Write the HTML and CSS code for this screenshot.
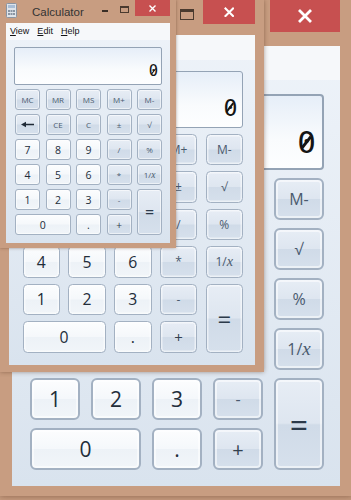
FILE: index.html
```html
<!DOCTYPE html>
<html>
<head>
<meta charset="utf-8">
<link rel="stylesheet" href="styles.css">
</head>
<body>
<div class="desk">
  <div class="win z2">
    <div class="titlebar">
      <svg class="appicon" viewBox="0 0 11 15"><rect x="0.5" y="0.5" width="10" height="14" rx="1" fill="#dfe4ea" stroke="#8a95a3"/><rect x="2" y="2" width="7" height="3" fill="#a9bed6"/><rect x="2" y="7" width="2" height="2" fill="#8a95a3"/><rect x="4.5" y="7" width="2" height="2" fill="#8a95a3"/><rect x="7" y="7" width="2" height="2" fill="#8a95a3"/><rect x="2" y="10" width="2" height="2" fill="#8a95a3"/><rect x="4.5" y="10" width="2" height="2" fill="#8a95a3"/><rect x="7" y="10" width="2" height="2" fill="#8a95a3"/></svg>
      <span class="title">Calculator</span>
      <span class="min"></span>
      <span class="max"></span>
      <span class="close"><svg viewBox="0 0 7 7" class="xicon"><path d="M0.5 0.5L6.5 6.5M6.5 0.5L0.5 6.5" stroke="#fff" stroke-width="1.4" fill="none"/></svg></span>
    </div>
    <div class="client">
      <div class="menubar"><span><u>V</u>iew</span><span><u>E</u>dit</span><span><u>H</u>elp</span></div>
      <div class="body">
        <div class="display"><span class="num">0</span></div>
        <div class="keys">
          <div class="k">MC</div><div class="k">MR</div><div class="k">MS</div><div class="k">M+</div><div class="k">M-</div>
          <div class="k"><svg class="back" viewBox="0 0 13 7"><path d="M4 3.5H13" stroke="#1f2a36" stroke-width="1.5"/><path d="M0 3.5L5 0.7V6.3Z" fill="#1f2a36"/></svg></div><div class="k">CE</div><div class="k">C</div><div class="k">±</div><div class="k">√</div>
          <div class="k d">7</div><div class="k d">8</div><div class="k d">9</div><div class="k">/</div><div class="k">%</div>
          <div class="k d">4</div><div class="k d">5</div><div class="k d">6</div><div class="k">*</div><div class="k">1/<i>x</i></div>
          <div class="k d">1</div><div class="k d">2</div><div class="k d">3</div><div class="k">-</div><div class="k eq">=</div>
          <div class="k d zero">0</div><div class="k d">.</div><div class="k plus">+</div>
        </div>
      </div>
    </div>
  </div>
  <div class="win z15">
    <div class="titlebar">
      <svg class="appicon" viewBox="0 0 11 15"><rect x="0.5" y="0.5" width="10" height="14" rx="1" fill="#dfe4ea" stroke="#8a95a3"/><rect x="2" y="2" width="7" height="3" fill="#a9bed6"/><rect x="2" y="7" width="2" height="2" fill="#8a95a3"/><rect x="4.5" y="7" width="2" height="2" fill="#8a95a3"/><rect x="7" y="7" width="2" height="2" fill="#8a95a3"/><rect x="2" y="10" width="2" height="2" fill="#8a95a3"/><rect x="4.5" y="10" width="2" height="2" fill="#8a95a3"/><rect x="7" y="10" width="2" height="2" fill="#8a95a3"/></svg>
      <span class="title">Calculator</span>
      <span class="min"></span>
      <span class="max"></span>
      <span class="close"><svg viewBox="0 0 7 7" class="xicon"><path d="M0.5 0.5L6.5 6.5M6.5 0.5L0.5 6.5" stroke="#fff" stroke-width="1.4" fill="none"/></svg></span>
    </div>
    <div class="client">
      <div class="menubar"><span><u>V</u>iew</span><span><u>E</u>dit</span><span><u>H</u>elp</span></div>
      <div class="body">
        <div class="display"><span class="num">0</span></div>
        <div class="keys">
          <div class="k">MC</div><div class="k">MR</div><div class="k">MS</div><div class="k">M+</div><div class="k">M-</div>
          <div class="k"><svg class="back" viewBox="0 0 13 7"><path d="M4 3.5H13" stroke="#1f2a36" stroke-width="1.5"/><path d="M0 3.5L5 0.7V6.3Z" fill="#1f2a36"/></svg></div><div class="k">CE</div><div class="k">C</div><div class="k">±</div><div class="k">√</div>
          <div class="k d">7</div><div class="k d">8</div><div class="k d">9</div><div class="k">/</div><div class="k">%</div>
          <div class="k d">4</div><div class="k d">5</div><div class="k d">6</div><div class="k">*</div><div class="k">1/<i>x</i></div>
          <div class="k d">1</div><div class="k d">2</div><div class="k d">3</div><div class="k">-</div><div class="k eq">=</div>
          <div class="k d zero">0</div><div class="k d">.</div><div class="k plus">+</div>
        </div>
      </div>
    </div>
  </div>
  <div class="win z1">
    <div class="titlebar">
      <svg class="appicon" viewBox="0 0 11 15"><rect x="0.5" y="0.5" width="10" height="14" rx="1" fill="#dfe4ea" stroke="#8a95a3"/><rect x="2" y="2" width="7" height="3" fill="#a9bed6"/><rect x="2" y="7" width="2" height="2" fill="#8a95a3"/><rect x="4.5" y="7" width="2" height="2" fill="#8a95a3"/><rect x="7" y="7" width="2" height="2" fill="#8a95a3"/><rect x="2" y="10" width="2" height="2" fill="#8a95a3"/><rect x="4.5" y="10" width="2" height="2" fill="#8a95a3"/><rect x="7" y="10" width="2" height="2" fill="#8a95a3"/></svg>
      <span class="title">Calculator</span>
      <span class="min"></span>
      <span class="max"></span>
      <span class="close"><svg viewBox="0 0 7 7" class="xicon"><path d="M0.5 0.5L6.5 6.5M6.5 0.5L0.5 6.5" stroke="#fff" stroke-width="1.4" fill="none"/></svg></span>
    </div>
    <div class="client">
      <div class="menubar"><span><u>V</u>iew</span><span><u>E</u>dit</span><span><u>H</u>elp</span></div>
      <div class="body">
        <div class="display"><span class="num">0</span></div>
        <div class="keys">
          <div class="k">MC</div><div class="k">MR</div><div class="k">MS</div><div class="k">M+</div><div class="k">M-</div>
          <div class="k"><svg class="back" viewBox="0 0 13 7"><path d="M4 3.5H13" stroke="#1f2a36" stroke-width="1.5"/><path d="M0 3.5L5 0.7V6.3Z" fill="#1f2a36"/></svg></div><div class="k">CE</div><div class="k">C</div><div class="k">±</div><div class="k">√</div>
          <div class="k d">7</div><div class="k d">8</div><div class="k d">9</div><div class="k">/</div><div class="k">%</div>
          <div class="k d">4</div><div class="k d">5</div><div class="k d">6</div><div class="k">*</div><div class="k">1/<i>x</i></div>
          <div class="k d">1</div><div class="k d">2</div><div class="k d">3</div><div class="k">-</div><div class="k eq">=</div>
          <div class="k d zero">0</div><div class="k d">.</div><div class="k plus">+</div>
        </div>
      </div>
    </div>
  </div>
</div>
</body>
</html>
```
FILE: styles.css
```css
html, body { margin: 0; padding: 0; background: #c59a7e; }
.desk { position: relative; width: 351px; height: 500px; overflow: hidden; background: #c59a7e; }
.win {
  position: absolute; left: 0; top: 0;
  width: 176px; height: 248px; box-sizing: border-box;
  padding: 0 6px 5px;
  background: #c89d81;
  display: flex; flex-direction: column;
  box-shadow: 0 0 3px rgba(70, 40, 20, 0.45);
  font-family: "Open Sans", sans-serif;
}
.z1 { zoom: 1; }
.z15 { zoom: 1.5; }
.z2 { zoom: 2; }

.titlebar { height: 23px; flex: none; display: flex; align-items: flex-start; }
.appicon { width: 11px; height: 15px; margin-top: 3px; flex: none; }
.title { margin-left: 15px; font: 11.5px/24px "Liberation Sans", sans-serif; color: #333; }
.min { margin-left: auto; width: 6px; height: 2px; margin-top: 10px; margin-right: 12px; background: #3a2e26; }
.max { width: 9px; height: 7px; box-sizing: border-box; border: 1px solid #4a3a2e; border-top-width: 2px; margin-top: 6px; margin-right: 6px; }
.close { width: 35px; height: 16px; background: #c75050; display: flex; align-items: center; justify-content: center; }
.xicon { width: 7px; height: 7px; }

.client { flex: 1; display: flex; flex-direction: column; background: linear-gradient(#eef3f9, #d9e3ee); }
.menubar { height: 17px; flex: none; background: #f6f8fa; display: flex; gap: 8px; padding-left: 4px; font: 9px/17px "Liberation Sans", sans-serif; color: #111; }
.body { flex: 1; padding: 7px 8px 8px; }
.display {
  height: 38px; box-sizing: border-box;
  border: 1px solid #94a3b5; border-radius: 2px;
  background: linear-gradient(#e6eef8, #f9fbfd 60%, #fdfeff);
  display: flex; justify-content: flex-end; align-items: flex-end;
  padding: 0 3px 5px 0;
  font: 15.5px/1 "DejaVu Sans Mono", monospace; color: #151515;
}
.num { position: relative; display: inline-block; }
.num::after {
  content: ""; position: absolute;
  left: calc(50% - 0.045em); top: 0.26em;
  width: 0.09em; height: 0.46em;
  background: currentColor;
  transform: rotate(38deg);
}
.keys {
  margin: 4px 0 0 1px;
  display: grid;
  grid-template-columns: repeat(5, 25px);
  grid-template-rows: repeat(6, 21px);
  column-gap: 5.5px; row-gap: 4px;
}
.k {
  box-sizing: border-box;
  border: 1px solid #a3b1c2; border-radius: 3px;
  display: flex; align-items: center; justify-content: center;
  box-shadow: inset 0 0 0 1px rgba(255, 255, 255, 0.55);
  font-size: 8px; color: #4a5a6e;
  background: linear-gradient(#e7edf5, #dee6f0 49%, #d0dbe8 51%, #d6e0ec);
}
.k i { font-family: "Liberation Serif", serif; font-size: 9.5px; }
.d { background: linear-gradient(#fcfdfe, #f5f8fb 49%, #edf2f7 51%, #f1f5f9); font-size: 10.5px; color: #222d3a; }
.plus { font-size: 10px; color: #33414f; }
.eq { grid-column: 5; grid-row: 5 / span 2; font-size: 16px; color: #2c3a4a; }
.zero { grid-column: span 2; }
.back { width: 13px; height: 7px; }
```
